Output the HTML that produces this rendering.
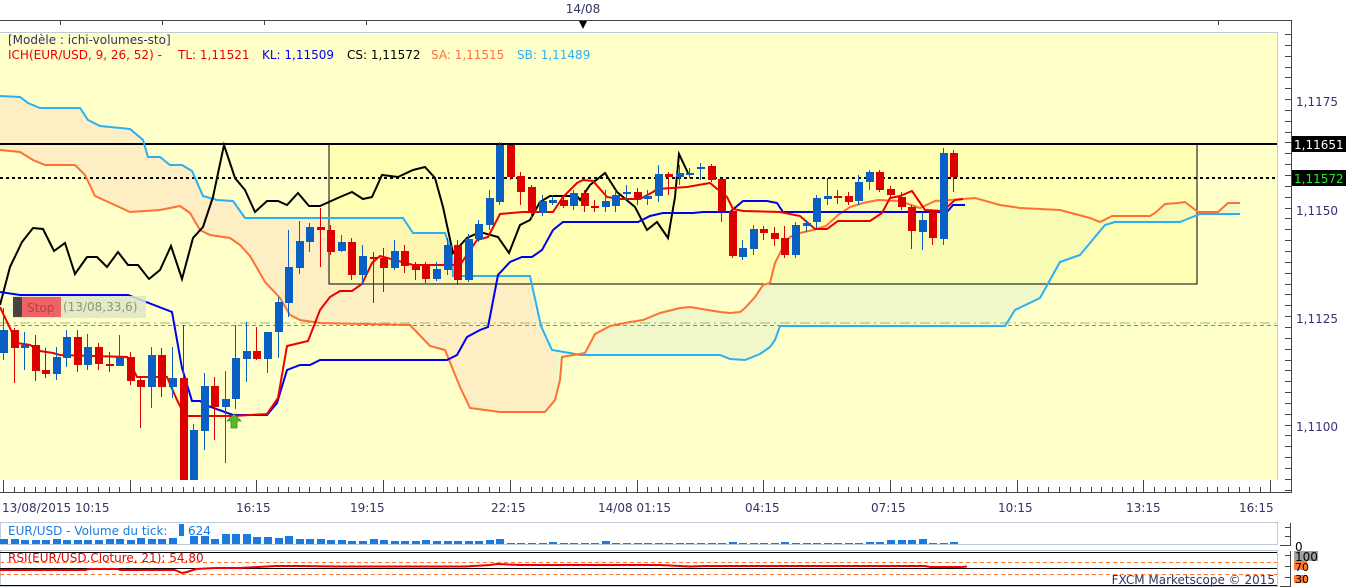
<!DOCTYPE html>
<html><head><meta charset="utf-8"><style>
html,body{margin:0;padding:0;background:#fff;width:1349px;height:588px;overflow:hidden}
svg{display:block}
text{font-family:"DejaVu Sans","Liberation Sans",sans-serif}
</style></head><body>
<svg id="s" width="1349" height="588" viewBox="0 0 1349 588" xmlns="http://www.w3.org/2000/svg">
<rect x="0" y="0" width="1349" height="588" fill="#fff"/>
<line x1="0" y1="20.5" x2="1291" y2="20.5" stroke="#444"/>
<text x="583" y="13" font-size="12" fill="#333366" text-anchor="middle">14/08</text>
<polygon points="579,21 587,21 583,29" fill="#000"/>
<g stroke="#444"><line x1="60.5" y1="20" x2="60.5" y2="25"/><line x1="162.5" y1="20" x2="162.5" y2="25"/><line x1="264.5" y1="20" x2="264.5" y2="25"/><line x1="366.5" y1="20" x2="366.5" y2="25"/><line x1="1218.5" y1="20" x2="1218.5" y2="25"/></g>
<rect x="0" y="32" width="1277" height="448" fill="#ffffca"/>
<g id="cloud"></g>
<rect x="329" y="144" width="868" height="140" fill="#ffff99" fill-opacity="0.45" stroke="#000" stroke-width="1"/>
<line x1="0" y1="144" x2="1277" y2="144" stroke="#000" stroke-width="2"/>
<line x1="0" y1="178" x2="1277" y2="178" stroke="#000" stroke-width="2" stroke-dasharray="3,3"/>
<line x1="0" y1="323" x2="1277" y2="323" stroke="#9ab87a" stroke-width="1" stroke-dasharray="10,4,2,4"/>
<line x1="0" y1="325.5" x2="1277" y2="325.5" stroke="#e06060" stroke-width="1" stroke-dasharray="4,3"/>
<g id="lines"></g>
<g id="candles"></g>
<rect x="13" y="296" width="133" height="22" fill="#dfe6c8" opacity="0.85"/>
<rect x="13" y="297" width="9" height="20" fill="#444"/>
<rect x="22" y="297" width="39" height="20" fill="#ee6464"/>
<text x="27" y="312" font-size="12" fill="#b84040">Stop</text>
<text x="63" y="311" font-size="12" fill="#8a9a70">(13/08,33,6)</text>
<polygon points="234,414 241,421 237,421 237,428 231,428 231,421 227,421" fill="#5cb82a" stroke="#3a8a10" stroke-width="0.8"/>
<line x1="1277.5" y1="32" x2="1277.5" y2="480" stroke="#c0cad8"/>
<line x1="0" y1="32.5" x2="1277" y2="32.5" stroke="#c0cad8"/>
<text x="8" y="44" font-size="12" fill="#333366">[Modèle : ichi-volumes-sto]</text>
<g font-size="12">
<text x="8" y="59" fill="#ee0000">ICH(EUR/USD, 9, 26, 52) -</text>
<text x="178" y="59" fill="#ee0000">TL: 1,11521</text>
<text x="262" y="59" fill="#0000ee">KL: 1,11509</text>
<text x="347" y="59" fill="#000">CS: 1,11572</text>
<text x="431" y="59" fill="#ff7040">SA: 1,11515</text>
<text x="517" y="59" fill="#30b0f0">SB: 1,11489</text>
</g>
<line x1="1291.5" y1="20" x2="1291.5" y2="493" stroke="#444"/>
<g id="rticks"></g>
<g font-size="12" fill="#333377">
<text x="1296" y="106">1,1175</text><text x="1296" y="215">1,1150</text><text x="1296" y="323">1,1125</text><text x="1296" y="431">1,1100</text></g>
<rect x="1292" y="136" width="54" height="16" fill="#000"/><text x="1294" y="149" font-size="12" fill="#fff">1,11651</text>
<rect x="1292" y="170" width="54" height="16" fill="#000"/><text x="1294" y="183" font-size="12" fill="#22ee22">1,11572</text>
<line x1="0" y1="492.5" x2="1291" y2="492.5" stroke="#444"/>
<g id="tticks"></g>
<g font-size="12" fill="#333366">
<text x="2" y="512">13/08/2015 10:15</text><text x="236" y="512">16:15</text><text x="350" y="512">19:15</text><text x="491" y="512">22:15</text><text x="598" y="512">14/08 01:15</text><text x="745" y="512">04:15</text><text x="871" y="512">07:15</text><text x="998" y="512">10:15</text><text x="1126" y="512">13:15</text><text x="1239" y="512">16:15</text></g>
<rect x="0.5" y="522.5" width="1277" height="22" fill="#fff" stroke="#c0cad8"/>
<g id="vol"></g>
<text x="8" y="535" font-size="12" fill="#1a7ae0">EUR/USD - Volume du tick:</text>
<rect x="179" y="524" width="5" height="12" fill="#1a7ae0"/>
<text x="188" y="535" font-size="12" fill="#1a7ae0">624</text>
<line x1="1290.5" y1="523" x2="1290.5" y2="545" stroke="#444"/>
<line x1="1280" y1="545.5" x2="1291" y2="545.5" stroke="#444"/>
<g stroke="#444"><line x1="1285" y1="527.5" x2="1291" y2="527.5"/><line x1="1285" y1="536.5" x2="1291" y2="536.5"/></g>
<text x="1295" y="551" font-size="12" fill="#000">0</text>
<rect x="0.5" y="550.5" width="1277" height="36" fill="#fff" stroke="#c0cad8"/>
<line x1="0" y1="552.5" x2="1277" y2="552.5" stroke="#000"/>
<line x1="0" y1="562.5" x2="1277" y2="562.5" stroke="#ff7a30" stroke-dasharray="4,3"/>
<line x1="0" y1="568.5" x2="1277" y2="568.5" stroke="#000"/>
<line x1="0" y1="574.5" x2="1277" y2="574.5" stroke="#ff7a30" stroke-dasharray="4,3"/>
<line x1="0" y1="585.5" x2="1277" y2="585.5" stroke="#000"/>
<polyline fill="none" stroke="#ee0000" stroke-width="2" points="0,570 85,570 90,569 118,569 120,570 175,570 182,573 187,572 196,569 215,568 240,568 275,566 300,566 340,566.5 465,566.5 490,565 497,564 520,565 660,565 690,566.5 705,566 925,566 930,567 962,567 967,566.5"/>
<text x="8" y="562" font-size="12" fill="#ee0000">RSI(EUR/USD.Cloture, 21): 54,80</text>
<text x="1275" y="584" font-size="12" fill="#333366" text-anchor="end">FXCM Marketscope © 2015</text>
<line x1="1290.5" y1="551" x2="1290.5" y2="586" stroke="#444"/>
<line x1="1280" y1="586.5" x2="1291" y2="586.5" stroke="#444"/>
<g stroke="#444"><line x1="1285" y1="555.5" x2="1291" y2="555.5"/><line x1="1285" y1="566.5" x2="1291" y2="566.5"/><line x1="1285" y1="577.5" x2="1291" y2="577.5"/></g>
<rect x="1294" y="551" width="24" height="10" fill="#a0a0a0"/>
<rect x="1294" y="561" width="13" height="9" fill="#ff7a30"/>
<rect x="1294" y="575" width="13" height="8" fill="#ff7a30"/>
<text x="1295" y="561" font-size="12" fill="#000">100</text>
<text x="1295" y="571" font-size="11" fill="#000">70</text>
<text x="1295" y="583" font-size="11" fill="#000">30</text>
</svg>
<script>
var NS="http://www.w3.org/2000/svg";
function el(p,t,a){var e=document.createElementNS(NS,t);for(var k in a)e.setAttribute(k,a[k]);document.getElementById(p).appendChild(e);return e;}
function pts(a){return a.map(function(p){return p[0]+","+p[1]}).join(" ");}
var SA=[[0,150],[20,152],[33,160],[45,165],[75,165],[85,175],[95,196],[130,212],[160,210],[180,206],[190,213],[200,230],[210,235],[230,238],[240,245],[250,256],[265,282],[280,298],[290,315],[300,320],[320,323],[410,325],[430,346],[445,350],[460,387],[470,408],[500,412],[545,412],[555,400],[560,380],[562,357],[585,353],[595,334],[610,326],[630,322],[643,320],[660,313],[680,308],[690,307],[720,312],[730,313],[740,312],[745,308],[755,297],[763,285],[770,283],[775,263],[785,243],[790,237],[800,233],[813,230],[826,226],[838,215],[850,207],[863,203],[878,200],[900,201],[920,208],[935,201],[950,200],[975,198],[1000,205],[1020,208],[1060,210],[1090,218],[1100,222],[1112,216],[1150,216],[1155,213],[1165,204],[1178,203],[1185,202],[1198,212],[1218,212],[1228,203],[1240,203]];
var SB=[[0,96],[20,97],[28,103],[40,108],[80,108],[88,120],[100,126],[130,129],[143,140],[148,157],[160,157],[170,165],[182,165],[192,171],[203,196],[217,200],[233,201],[245,218],[403,218],[413,233],[445,233],[452,253],[453,276],[530,276],[541,326],[552,350],[570,353],[580,355],[720,355],[730,359],[745,360],[760,354],[770,347],[775,340],[780,326],[1005,326],[1015,310],[1040,298],[1050,280],[1060,262],[1080,255],[1095,237],[1105,225],[1115,222],[1180,222],[1190,218],[1200,214],[1240,214]];
var CS=[[0,305],[10,267],[22,242],[33,228],[43,229],[54,251],[65,243],[75,274],[87,257],[97,257],[107,267],[118,252],[128,265],[138,265],[149,279],[160,270],[171,246],[182,279],[193,238],[203,227],[213,197],[224,145],[235,178],[245,190],[255,212],[267,201],[278,201],[287,205],[298,193],[309,206],[320,206],[340,197],[352,192],[363,199],[372,197],[382,175],[398,177],[413,170],[425,167],[435,178],[443,207],[453,253],[467,238],[480,232],[498,237],[509,253],[520,225],[530,220],[540,202],[550,196],[577,196],[580,200],[590,185],[605,173],[617,192],[635,207],[647,230],[657,222],[668,238],[675,197],[679,154],[688,173]];
var TL=[[0,307],[17,343],[30,345],[40,351],[53,353],[60,355],[127,357],[137,377],[167,377],[177,400],[185,416],[233,416],[267,414],[278,398],[287,346],[308,341],[320,310],[330,297],[340,291],[352,291],[362,284],[372,263],[380,256],[413,265],[460,265],[477,240],[488,237],[500,214],[523,212],[553,212],[563,197],[577,183],[583,180],[593,181],[607,197],[620,199],[640,199],[653,192],[657,189],[687,187],[710,183],[727,197],[733,209],[743,211],[780,212],[800,216],[815,229],[827,229],[838,221],[870,221],[882,213],[890,198],[900,196],[912,191],[925,210],[943,211],[955,200],[963,199]];
var KL=[[0,292],[20,295],[128,295],[172,312],[182,368],[192,401],[200,401],[208,406],[233,415],[267,415],[277,403],[287,370],[300,365],[310,365],[320,360],[447,360],[457,355],[467,337],[480,330],[488,327],[498,275],[510,262],[522,257],[532,257],[542,250],[553,230],[563,222],[638,222],[650,216],[663,213],[693,213],[703,212],[730,212],[743,201],[767,201],[777,203],[783,212],[947,212],[953,205],[965,205]];
var poly=SA.concat(SB.slice().reverse());
var defs=el("cloud","defs",{});
var c1=document.createElementNS(NS,"clipPath");c1.setAttribute("id","L");var r1=document.createElementNS(NS,"rect");r1.setAttribute("x",0);r1.setAttribute("y",0);r1.setAttribute("width",556);r1.setAttribute("height",600);c1.appendChild(r1);defs.appendChild(c1);
var c2=document.createElementNS(NS,"clipPath");c2.setAttribute("id","R");var r2=document.createElementNS(NS,"rect");r2.setAttribute("x",556);r2.setAttribute("y",0);r2.setAttribute("width",800);r2.setAttribute("height",600);c2.appendChild(r2);defs.appendChild(c2);
el("cloud","polygon",{points:pts(poly),fill:"#fdeec4","clip-path":"url(#L)"});
el("cloud","polygon",{points:pts(poly),fill:"#f0f7c8","clip-path":"url(#R)"});
el("lines","polyline",{points:pts(SB),fill:"none",stroke:"#2ab0f4","stroke-width":2});
el("lines","polyline",{points:pts(SA),fill:"none",stroke:"#ff7033","stroke-width":2});
el("lines","polyline",{points:pts(CS),fill:"none",stroke:"#000","stroke-width":2});
el("lines","polyline",{points:pts(KL),fill:"none",stroke:"#0000ee","stroke-width":2});
el("lines","polyline",{points:pts(TL),fill:"none",stroke:"#ee0000","stroke-width":2});
var C=[[353,330,308,360],[330,348,328,383],[348,345,332,370],[345,371,335,381],[370,374,348,378],[374,357,347,380],[358,337,330,367],[337,365,330,372],[365,347,334,370],[347,364,343,370],[364,366,352,372],[366,357,335,366],[357,381,352,385],[380,387,378,428],[387,355,347,408],[355,387,348,397],[387,378,347,398],[378,480,325,480],[480,430,424,480],[431,386,373,450],[386,407,377,440],[407,399,371,463],[399,358,325,409],[359,351,322,382],[351,359,327,360],[359,332,332,373],[332,302,297,358],[303,267,230,317],[268,241,221,274],[242,227,223,252],[227,230,208,267],[230,252,225,255],[251,242,235,252],[242,275,238,280],[275,256,245,285],[257,259,252,303],[258,268,248,292],[268,251,240,270],[251,266,245,273],[266,270,262,280],[265,279,262,283],[279,269,262,281],[270,245,238,275],[245,280,240,285],[280,239,234,282],[239,224,220,242],[225,198,190,230],[202,145,142,205],[145,177,145,180],[176,192,172,205],[187,213,185,218],[213,201,195,216],[203,200,195,205],[200,206,197,208],[206,193,190,210],[193,206,190,212],[206,207,200,212],[207,201,190,212],[206,195,190,212],[194,192,185,200],[192,199,188,205],[199,196,190,205],[196,174,165,202],[174,177,172,195],[177,173,165,185],[175,173,168,178],[169,167,163,180],[166,180,164,182],[179,211,178,222],[211,256,210,258],[257,248,240,260],[249,229,225,255],[229,233,226,240],[233,239,227,246],[238,255,226,258],[255,225,222,258],[226,223,220,232],[222,198,195,228],[199,196,178,205],[196,197,190,204],[196,202,192,205],[201,182,175,205],[182,172,170,190],[172,190,170,192],[189,195,186,198],[197,207,192,210],[207,231,205,249],[232,220,212,250],[212,238,212,245],[239,153,148,245],[153,177,150,192]];
var VR=[1,1,1,1,2,1,1,1,1,3,1,1,1,1,1,1,1,1,1,1,1,2,1,1,1,1,2,1,1,1,1,1,1,1,2,2,4,4,4,5,1,1];
for(var i=0;i<C.length;i++){var x=Math.round(3+i*10.56);var d=C[i];var up=d[1]<d[0];var col=up?"#0a5fc4":"#dd0000";
el("candles","line",{x1:x+0.5,y1:d[2],x2:x+0.5,y2:d[3],stroke:col,"stroke-width":1});
var t=Math.min(d[0],d[1]),b=Math.max(d[0],d[1]);if(b-t<2)b=t+2;
el("candles","rect",{x:x-3,y:t,width:8,height:b-t,fill:col});
var vh=i<48?[5,5,4,4,4,5,4,4,4,4,5,5,4,6,5,5,6,12,8,8,5,10,10,10,7,7,6,8,5,5,5,4,4,3,3,5,4,3,3,3,4,3,3,3,3,3,4,5][i]:(VR[i-48]||2);
if(i!=17)el("vol","rect",{x:x-3,y:544-vh,width:8,height:vh,fill:"#1a7ae0"});}
for(var y=34;y<=490;y+=10.85){var long=Math.abs(((y-101)/108.5*4)%1)<0.05;el("rticks","line",{x1:long?1278:1285,y1:Math.round(y)+0.5,x2:1291,y2:Math.round(y)+0.5,stroke:"#444"});}
for(var k=0;k<=120;k++){var x=Math.round(3+k*10.56);if(x>1277)break;var big=(k%12==0);el("tticks","line",{x1:x+0.5,y1:big?480:487,x2:x+0.5,y2:493,stroke:"#444"});}
</script>
</body></html>
